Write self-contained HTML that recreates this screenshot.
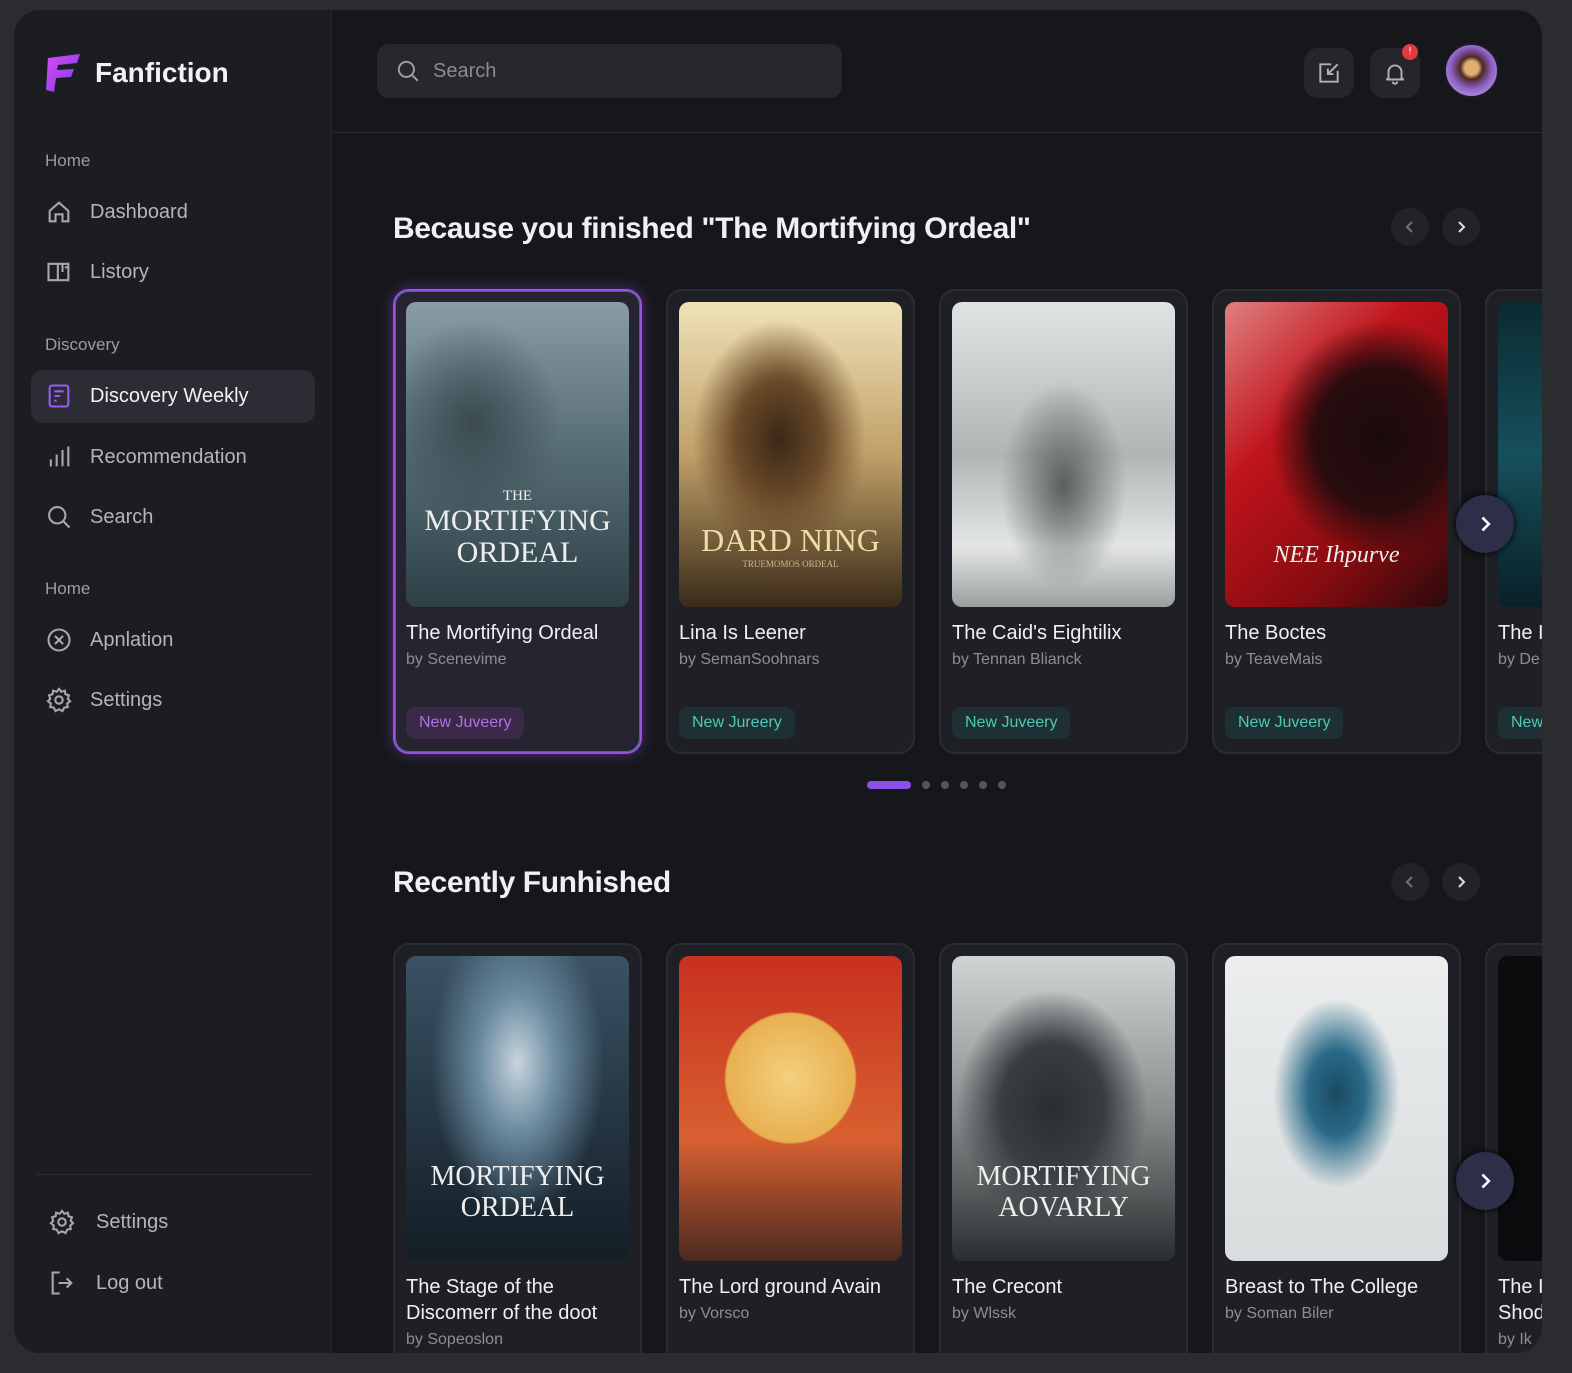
<!DOCTYPE html>
<html><head><meta charset="utf-8"><style>
*{margin:0;padding:0;box-sizing:border-box}
body{width:1572px;height:1373px;background:#2b2c30;font-family:"Liberation Sans",sans-serif;position:relative;overflow:hidden;color:#e6e6ea}
.app{position:absolute;left:14px;top:10px;width:1528px;height:1343px;border-radius:26px;background:#16171b;overflow:hidden}
.side{position:absolute;left:0;top:0;width:318px;height:100%;background:#1c1d21;border-right:1px solid #26272c}
.sec{position:absolute;left:31px;font-size:17px;color:#9c9da4}
.it{position:absolute;left:31px;font-size:20px;color:#b4b5bb;display:flex;align-items:center;gap:17px}
.it svg{width:28px;height:28px;stroke:#a6a7ad;fill:none;stroke-width:1.8}
.act{position:absolute;left:17px;top:360px;width:284px;height:53px;border-radius:12px;background:#2b2c34}
.main{position:absolute;left:319px;top:0;right:0;height:100%}
.search{position:absolute;left:44px;top:34px;width:465px;height:54px;border-radius:12px;background:#27282d;display:flex;align-items:center;padding-left:18px;gap:12px;color:#8a8b92;font-size:20px}
.hline{position:absolute;left:0;right:0;top:122px;height:1px;background:#2a2b30}
.ib{position:absolute;top:38px;width:50px;height:50px;border-radius:14px;background:#25262b;display:flex;align-items:center;justify-content:center}
h2{position:absolute;left:60px;font-size:30px;font-weight:bold;color:#f0f0f3;letter-spacing:-0.4px}
.nav{position:absolute;width:38px;height:38px;border-radius:50%;background:#222328;display:flex;align-items:center;justify-content:center}
.card{position:absolute;width:249px;border-radius:16px;background:#1f2026;border:2px solid #2b2c32;overflow:hidden}
.cov{position:absolute;left:11px;top:11px;width:223px;height:305px;border-radius:10px;overflow:hidden;display:flex;flex-direction:column;align-items:center;justify-content:flex-end;font-family:"Liberation Serif",serif;color:#eee;text-align:center;padding-bottom:38px}
.t{position:absolute;left:11px;top:329px;font-size:20px;color:#f0f0f3;line-height:26px;white-space:nowrap}
.a{position:absolute;left:11px;font-size:16px;color:#8d8e95;white-space:nowrap}
.tag{position:absolute;left:11px;top:416px;height:32px;padding:0 13px;border-radius:9px;background:#1f3034;color:#4ec9b5;font-size:16px;line-height:32px;white-space:nowrap}
.bn{position:absolute;width:58px;height:58px;border-radius:50%;background:#2d2e48;display:flex;align-items:center;justify-content:center;box-shadow:0 0 8px #000}
</style></head><body>
<div class="app">
<div class="side">
 <svg style="position:absolute;left:30px;top:42px" width="38" height="42" viewBox="0 0 38 42"><defs><linearGradient id="lg" x1="0" y1="0" x2="1" y2="1"><stop offset="0" stop-color="#d44cf0"/><stop offset="1" stop-color="#7a3cf0"/></linearGradient></defs><path d="M4 6 L36 2 L33 11 L14 13 L13 18 L30 17 L27 25 L12 26 L10 40 L2 38 Z" fill="url(#lg)"/></svg>
 <div style="position:absolute;left:81px;top:47px;font-size:28px;font-weight:bold;color:#f2f2f5">Fanfiction</div>
 <div class="sec" style="top:141px">Home</div>
 <div class="it" style="top:188px"><svg viewBox="0 0 24 24"><path d="M4 11 L12 4 L20 11 V20 H15 V14 H9 V20 H4 Z"/></svg>Dashboard</div>
 <div class="it" style="top:248px"><svg viewBox="0 0 24 24"><path d="M3 5 H11 V19 H3 Z M11 5 H20 V19 H11 M15 5 V12 M17 8 H20"/></svg>Listory</div>
 <div class="sec" style="top:325px">Discovery</div>
 <div class="act"></div>
 <div class="it" style="top:372px;color:#f2f2f5"><svg viewBox="0 0 24 24" style="stroke:#9a5cf0"><rect x="4" y="3" width="16" height="18" rx="2"/><path d="M8 8 H16 M8 12 H13 M8 16 H10"/></svg>Discovery Weekly</div>
 <div class="it" style="top:433px"><svg viewBox="0 0 24 24"><path d="M5 20 V14 M10 20 V10 M15 20 V6 M20 20 V3"/></svg>Recommendation</div>
 <div class="it" style="top:493px"><svg viewBox="0 0 24 24"><circle cx="10.5" cy="10.5" r="7"/><path d="M16 16 L21 21"/></svg>Search</div>
 <div class="sec" style="top:569px">Home</div>
 <div class="it" style="top:616px"><svg viewBox="0 0 24 24"><circle cx="12" cy="12" r="9"/><path d="M8.5 8.5 L15.5 15.5 M15.5 8.5 L8.5 15.5"/></svg>Apnlation</div>
 <div class="it" style="top:676px"><svg viewBox="0 0 24 24"><circle cx="12" cy="12" r="3.2"/><path d="M12 2.5 L14 5 L17 4 L17.5 7 L20.5 8 L19.5 11 L21.5 13 L19 15 L19.5 18 L16.5 18.5 L15 21.5 L12 20 L9 21.5 L7.5 18.5 L4.5 18 L5 15 L2.5 13 L4.5 11 L3.5 8 L6.5 7 L7 4 L10 5 Z"/></svg>Settings</div>
 <div style="position:absolute;left:22px;top:1164px;width:276px;height:1px;background:#2c2d32"></div>
 <div class="it" style="top:1198px;left:34px;gap:20px"><svg viewBox="0 0 24 24"><circle cx="12" cy="12" r="3.2"/><path d="M12 2.5 L14 5 L17 4 L17.5 7 L20.5 8 L19.5 11 L21.5 13 L19 15 L19.5 18 L16.5 18.5 L15 21.5 L12 20 L9 21.5 L7.5 18.5 L4.5 18 L5 15 L2.5 13 L4.5 11 L3.5 8 L6.5 7 L7 4 L10 5 Z"/></svg>Settings</div>
 <div class="it" style="top:1259px;left:34px;gap:20px"><svg viewBox="0 0 24 24"><path d="M10 3 H4 V21 H10 M9 12 H20 M16 8 L20 12 L16 16"/></svg>Log out</div>
</div>
<div class="main">
 <div class="search"><svg width="26" height="26" viewBox="0 0 24 24" fill="none" stroke="#a0a1a7" stroke-width="1.8"><circle cx="10.5" cy="10.5" r="7"/><path d="M16 16 L21 21"/></svg>Search</div>
 <div class="ib" style="left:971px"><svg width="26" height="26" viewBox="0 0 24 24" fill="none" stroke="#b0b1b7" stroke-width="1.8"><path d="M14 4 H4 V20 H20 V10 M20 4 L11 13 M11 8 V13 H16"/></svg></div>
 <div class="ib" style="left:1037px"><svg width="26" height="26" viewBox="0 0 24 24" fill="none" stroke="#b0b1b7" stroke-width="1.8"><path d="M6 17 V11 A6 6 0 0 1 18 11 V17 L20 18 H4 Z M10 20 A2 2 0 0 0 14 20"/></svg><div style="position:absolute;right:2px;top:-4px;width:16px;height:16px;border-radius:50%;background:#e03c3c;color:#fff;font-size:10px;text-align:center;line-height:16px">!</div></div>
 <div style="position:absolute;left:1111px;top:33px;width:55px;height:55px;border-radius:50%;background:radial-gradient(circle at 50% 45%,#e0b070 0 18%,#4a2a28 30%,#9060c8 55%,#b090e0 80%);border:2px solid #1c1b22"></div>
 <div class="hline"></div>

 <h2 style="top:202px">Because you finished "The Mortifying Ordeal"</h2>
 <div class="nav" style="left:1058px;top:198px"><svg width="14" height="14" viewBox="0 0 14 14" fill="none" stroke="#70717a" stroke-width="2"><path d="M9 2 L4 7 L9 12"/></svg></div>
 <div class="nav" style="left:1109px;top:198px"><svg width="14" height="14" viewBox="0 0 14 14" fill="none" stroke="#e0e0e4" stroke-width="2"><path d="M5 2 L10 7 L5 12"/></svg></div>

 <div class="card" style="left:60px;top:279px;height:465px;background:#262430;border:2px solid #9a50e0;box-shadow:0 0 14px rgba(150,80,230,.45),inset 0 0 0 1px rgba(80,180,230,.5)">
  <div class="cov" style="background:radial-gradient(ellipse at 30% 40%,#3a4a50 0,transparent 40%),linear-gradient(#8a9ca4,#5a7078 45%,#2e4046)"><div style="font-size:15px">THE</div><div style="font-size:30px;line-height:32px">MORTIFYING<br>ORDEAL</div></div>
  <div class="t">The Mortifying Ordeal</div><div class="a" style="top:360px">by Scenevime</div>
  <div class="tag" style="background:#3a2a48;color:#b070e8">New Juveery</div></div>
 <div class="card" style="left:333px;top:279px;height:465px">
  <div class="cov" style="background:radial-gradient(ellipse at 45% 45%,#3a2818 0,#6a4a28 25%,transparent 50%),linear-gradient(#f0e2b8,#c0a068 50%,#3a2a18)"><div style="font-size:32px;color:#f0dca8">DARD NING</div><div style="font-size:9px;color:#c8b890">TRUEMOMOS ORDEAL</div></div>
  <div class="t">Lina Is Leener</div><div class="a" style="top:360px">by SemanSoohnars</div><div class="tag">New Jureery</div></div>
 <div class="card" style="left:606px;top:279px;height:465px">
  <div class="cov" style="background:radial-gradient(ellipse at 50% 60%,#5a5e5e 0,transparent 40%),linear-gradient(#dfe3e3,#b0b6b6 50%,#e4e6e6 80%,#9a9e9e)"></div>
  <div class="t">The Caid's Eightilix</div><div class="a" style="top:360px">by Tennan Blianck</div><div class="tag">New Juveery</div></div>
 <div class="card" style="left:879px;top:279px;height:465px">
  <div class="cov" style="background:radial-gradient(ellipse at 70% 45%,#1a0a0c 0,#2a0c0e 30%,transparent 50%),linear-gradient(135deg,#e08080,#c0141c 35%,#8a0c10 70%,#2a0a0c)"><div style="font-size:24px;font-style:italic">NEE Ihpurve</div></div>
  <div class="t">The Boctes</div><div class="a" style="top:360px">by TeaveMais</div><div class="tag">New Juveery</div></div>
 <div class="card" style="left:1152px;top:279px;height:465px">
  <div class="cov" style="background:linear-gradient(#0b2a32,#16505a 50%,#0a2028)"></div>
  <div class="t">The I</div><div class="a" style="top:360px">by De</div><div class="tag">New</div></div>
 <div class="bn" style="left:1123px;top:485px"><svg width="18" height="18" viewBox="0 0 14 14" fill="none" stroke="#fff" stroke-width="2"><path d="M5 2 L10 7 L5 12"/></svg></div>

 <div style="position:absolute;left:534px;top:771px;width:44px;height:8px;border-radius:4px;background:#8a50e8"></div>
 <div style="position:absolute;left:589px;top:771px;width:8px;height:8px;border-radius:50%;background:#55565c;box-shadow:19px 0 #55565c,38px 0 #55565c,57px 0 #55565c,76px 0 #55565c"></div>

 <h2 style="top:856px">Recently Funhished</h2>
 <div class="nav" style="left:1058px;top:853px"><svg width="14" height="14" viewBox="0 0 14 14" fill="none" stroke="#70717a" stroke-width="2"><path d="M9 2 L4 7 L9 12"/></svg></div>
 <div class="nav" style="left:1109px;top:853px"><svg width="14" height="14" viewBox="0 0 14 14" fill="none" stroke="#e0e0e4" stroke-width="2"><path d="M5 2 L10 7 L5 12"/></svg></div>

 <div class="card" style="left:60px;top:933px;height:440px">
  <div class="cov" style="background:radial-gradient(ellipse at 50% 35%,#c8d4dc 0,#6a8aa0 25%,transparent 55%),linear-gradient(#3a5264,#22323e 60%,#141e26)"><div style="font-size:28px;line-height:31px">MORTIFYING<br>ORDEAL</div></div>
  <div class="t">The Stage of the<br>Discomerr of the doot</div><div class="a" style="top:386px">by Sopeoslon</div></div>
 <div class="card" style="left:333px;top:933px;height:440px">
  <div class="cov" style="background:radial-gradient(circle at 50% 40%,#f4d080 0,#e8b050 30%,transparent 31%),linear-gradient(#c83020,#d86030 60%,#4a2a20)"></div>
  <div class="t">The Lord ground Avain</div><div class="a" style="top:360px">by Vorsco</div></div>
 <div class="card" style="left:606px;top:933px;height:440px">
  <div class="cov" style="background:radial-gradient(ellipse at 45% 50%,#2a2e32 0,#3a3e42 30%,transparent 55%),linear-gradient(#d0d4d4,#8a9090 50%,#2a2e30)"><div style="font-size:28px;line-height:31px">MORTIFYING<br>AOVARLY</div></div>
  <div class="t">The Crecont</div><div class="a" style="top:360px">by Wlssk</div></div>
 <div class="card" style="left:879px;top:933px;height:440px">
  <div class="cov" style="background:radial-gradient(ellipse at 50% 45%,#1a4a60 0,#2a6a88 18%,transparent 40%),linear-gradient(#eceeee,#d8dcdc)"></div>
  <div class="t">Breast to The College</div><div class="a" style="top:360px">by Soman Biler</div></div>
 <div class="card" style="left:1152px;top:933px;height:440px">
  <div class="cov" style="background:radial-gradient(ellipse at 80% 40%,#5a0c10,#0c0c0e 40%)"></div>
  <div class="t">The I<br>Shod</div><div class="a" style="top:386px">by Ik</div></div>
 <div class="bn" style="left:1123px;top:1142px"><svg width="18" height="18" viewBox="0 0 14 14" fill="none" stroke="#fff" stroke-width="2"><path d="M5 2 L10 7 L5 12"/></svg></div>
</div>
</div>
</body></html>
